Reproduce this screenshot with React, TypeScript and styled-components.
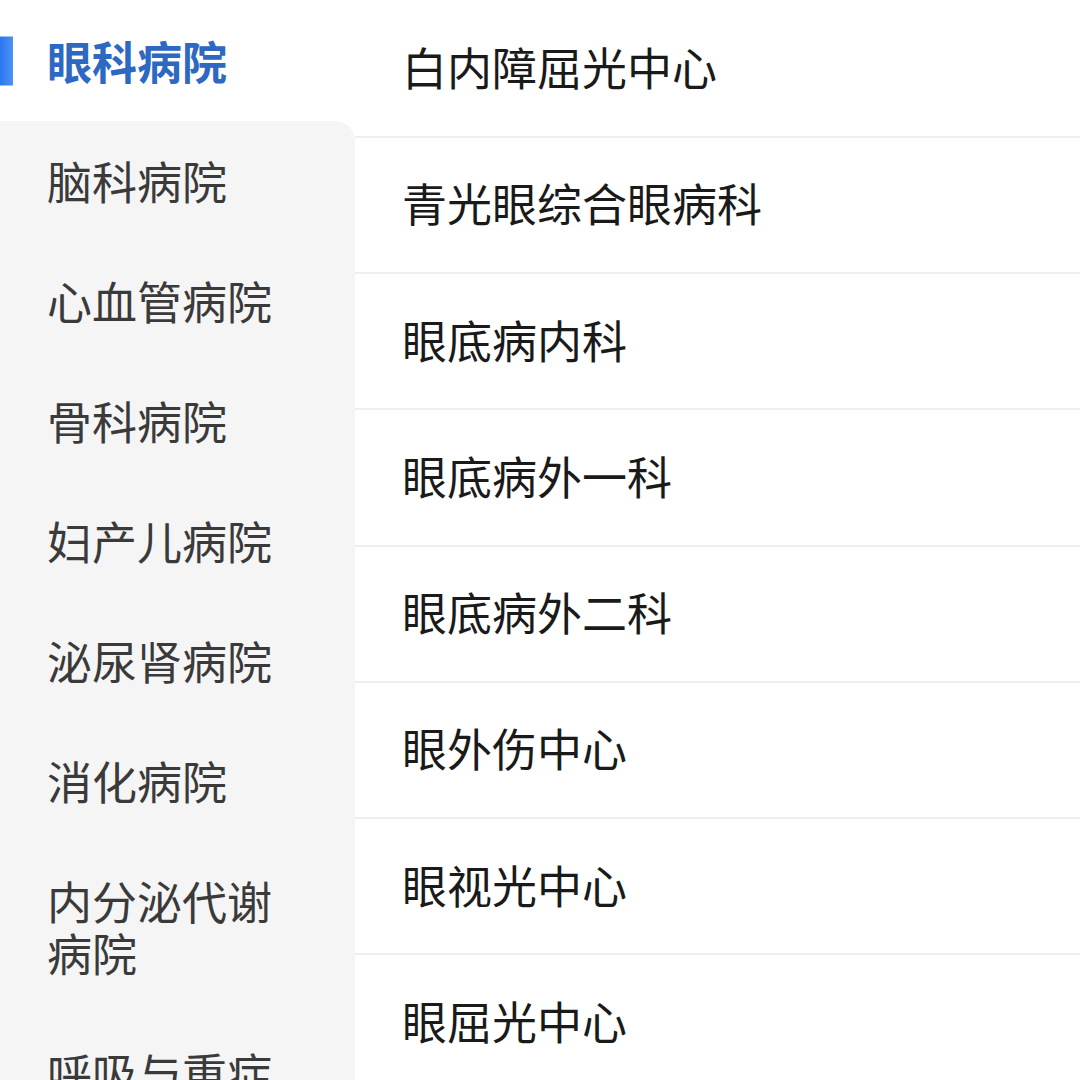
import React from 'react';
import styled, { createGlobalStyle } from "styled-components";

const GlobalStyle=createGlobalStyle`
	html,body{
		margin:0;
		padding:0;
		background:#ffffff;
	}
	body{
		font-family:"Noto Sans CJK SC","Noto Sans",sans-serif;
	}
`;

const Page=styled.div`
	display:flex;
	width:1080px;
	height:1080px;
	overflow:hidden;
	background:#ffffff;
`;

const Sidebar=styled.ul`
	width:355px;
	flex-shrink:0;
	margin:0;
	padding:1px 0 0 0;
	list-style:none;
	background:#ffffff;
`;

const SideItem=styled.li<{ $active?:boolean; $afterActive?:boolean }>`
	position:relative;
	padding:34px 60px 34px 47px;
	font-size:45px;
	line-height:52px;
	color:${p=>p.$active?'#2d68c2':'#3a3a3a'};
	font-weight:${p=>p.$active?700:400};
	background:${p=>p.$active?'#ffffff':'#f5f5f5'};
	border-top-right-radius:${p=>p.$afterActive?'20px':'0'};

	&::before{
		content:"";
		display:${p=>p.$active?'block':'none'};
		position:absolute;
		left:0;
		top:50%;
		width:13px;
		height:49px;
		transform:translateY(-50%);
		background:linear-gradient(90deg,#2a76ef,#4b92f6);
	}
`;

const DeptList=styled.ul`
	flex:1;
	margin:0;
	padding:1.5px 0 0 0;
	list-style:none;
`;

const DeptRow=styled.li`
	box-sizing:border-box;
	height:136.25px;
	display:flex;
	align-items:center;
	padding:0 0 4px 47px;
	border-bottom:2px solid #eeeeee;
	font-size:45px;
	color:#1a1a1a;
`;

const hospitals=['眼科病院','脑科病院','心血管病院','骨科病院','妇产儿病院','泌尿肾病院','消化病院','内分泌代谢病院','呼吸与重症医学病院'];

const departments=['白内障屈光中心','青光眼综合眼病科','眼底病内科','眼底病外一科','眼底病外二科','眼外伤中心','眼视光中心','眼屈光中心'];

const App:React.FC=()=>{
	const activeIndex=0;

	return(
		<>
			<GlobalStyle/>
			<Page>
				<Sidebar>
					{hospitals.map((name,i)=>(
						<SideItem key={name} $active={i===activeIndex} $afterActive={i===activeIndex+1}>
							{name}
						</SideItem>
					))}
				</Sidebar>
				<DeptList>
					{departments.map(name=>(
						<DeptRow key={name}>{name}</DeptRow>
					))}
				</DeptList>
			</Page>
		</>
	);
}

export default App;
